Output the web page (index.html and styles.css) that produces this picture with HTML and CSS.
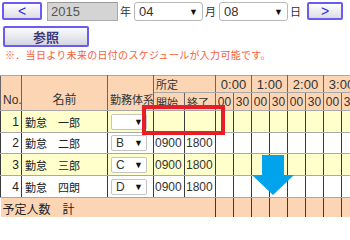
FILE: index.html
```html
<!DOCTYPE html>
<html lang="ja">
<head>
<meta charset="utf-8">
<title>スケジュール</title>
<link rel="stylesheet" href="styles.css">
</head>
<body>
<div class="page">
  <div class="nav">
    <button class="btn btn-nav">&lt;</button>
    <div class="year">2015</div>
    <span class="unit">年</span>
    <div class="sel sel-top"><span>04</span><span class="arr">▼</span></div>
    <span class="unit">月</span>
    <div class="sel sel-top"><span>08</span><span class="arr">▼</span></div>
    <span class="unit">日</span>
    <button class="btn btn-nav btn-next">&gt;</button>
  </div>
  <div class="actions"><button class="btn btn-ref">参照</button></div>
  <p class="note">※．当日より未来の日付のスケジュールが入力可能です。</p>
  <div class="grid-wrap">
    <table class="grid">
      <colgroup>
        <col class="c-no"><col class="c-name"><col class="c-type"><col class="c-time"><col class="c-time">
        <col class="c-half"><col class="c-half"><col class="c-half"><col class="c-half"><col class="c-half"><col class="c-half"><col class="c-half"><col class="c-half">
      </colgroup>
      <thead>
        <tr class="h1">
          <th rowspan="2" class="bottom">No.</th>
          <th rowspan="2" class="bottom">名前</th>
          <th rowspan="2" class="bottom left">勤務体系</th>
          <th colspan="2" class="left">所定</th>
          <th colspan="2" class="hour">0:00</th>
          <th colspan="2" class="hour">1:00</th>
          <th colspan="2" class="hour">2:00</th>
          <th colspan="2" class="hour">3:00</th>
        </tr>
        <tr class="h2">
          <th class="left">開始</th><th class="left">終了</th>
          <th class="sub">00</th><th class="sub">30</th>
          <th class="sub">00</th><th class="sub">30</th>
          <th class="sub">00</th><th class="sub">30</th>
          <th class="sub">00</th><th class="sub">30</th>
        </tr>
      </thead>
      <tbody>
        <tr class="odd">
          <td class="num">1</td><td class="name">勤怠　一郎</td>
          <td class="type"><div class="sel sel-cell"><span></span><span class="arr">▼</span></div></td>
          <td></td><td></td>
          <td></td><td></td><td></td><td></td><td></td><td></td><td></td><td></td>
        </tr>
        <tr class="even">
          <td class="num">2</td><td class="name">勤怠　二郎</td>
          <td class="type"><div class="sel sel-cell"><span>B</span><span class="arr">▼</span></div></td>
          <td class="t">0900</td><td class="t">1800</td>
          <td></td><td></td><td></td><td></td><td></td><td></td><td></td><td></td>
        </tr>
        <tr class="odd">
          <td class="num">3</td><td class="name">勤怠　三郎</td>
          <td class="type"><div class="sel sel-cell"><span>C</span><span class="arr">▼</span></div></td>
          <td class="t">0900</td><td class="t">1800</td>
          <td></td><td></td><td></td><td></td><td></td><td></td><td></td><td></td>
        </tr>
        <tr class="even">
          <td class="num">4</td><td class="name">勤怠　四朗</td>
          <td class="type"><div class="sel sel-cell"><span>D</span><span class="arr">▼</span></div></td>
          <td class="t">0900</td><td class="t">1800</td>
          <td></td><td></td><td></td><td></td><td></td><td></td><td></td><td></td>
        </tr>
      </tbody>
      <tfoot>
        <tr class="foot">
          <td colspan="5" class="total">予定人数　計</td>
          <td></td><td></td><td></td><td></td><td></td><td></td><td></td><td></td>
        </tr>
      </tfoot>
    </table>
    <div class="highlight"></div>
    <svg class="arrow" width="42" height="40" viewBox="0 0 42 40"><polygon points="10,0 32,0 32,20 42,20 21,40 0,20 10,20" fill="#00a3ec"/></svg>
  </div>
</div>
</body>
</html>
```
FILE: styles.css
```css
html, body {
  margin: 0;
  padding: 0;
  background: #ffffff;
}
body {
  font-family: "Liberation Sans", "Noto Sans CJK JP", sans-serif;
  color: #222;
  width: 350px;
  height: 217px;
  overflow: hidden;
}
.page {
  width: 350px;
}
.nav {
  display: flex;
  align-items: flex-start;
  padding: 2px 0 0 2px;
  height: 19px;
}
.btn {
  box-sizing: border-box;
  border: 2px solid #6a5cf0;
  border-radius: 2px;
  background: linear-gradient(#ffffff, #dcdce4);
  padding: 0;
  margin: 0;
  font-family: "Liberation Sans", "Noto Sans CJK JP", sans-serif;
  cursor: pointer;
}
.btn-nav {
  width: 40px;
  height: 18px;
  color: #2b2be0;
  font-size: 14px;
  line-height: 12px;
}
.btn-next {
  width: 36px;
  margin-left: 4px;
}
.year {
  box-sizing: border-box;
  width: 71px;
  height: 19px;
  margin-left: 5px;
  background: #d4d4d4;
  border: 1px solid #aaaaaa;
  border-top-color: #999;
  color: #555;
  font-size: 13px;
  line-height: 17px;
  padding-left: 3px;
}
.unit {
  font-family: "Noto Sans CJK JP", sans-serif;
  font-size: 11px;
  line-height: 19px;
  color: #333;
  margin: 0 4px 0 2px;
  width: 9px;
}
.sel {
  box-sizing: border-box;
  display: flex;
  justify-content: space-between;
  align-items: center;
  background: #fff;
  border: 1px solid #b8b8b8;
  border-radius: 3px;
}
.sel-top {
  width: 69px;
  height: 19px;
  font-size: 13px;
  color: #333;
  padding: 0 4px 0 4px;
  margin-left: 1px;
}
.arr {
  font-size: 9px;
  color: #111;
}
.actions {
  padding: 5px 0 0 3px;
}
.btn-ref {
  width: 86px;
  height: 21px;
  border-color: #6a5cf0;
  background: linear-gradient(#fbfbfd, #d6d6e2);
  font-family: "Noto Sans CJK JP", sans-serif;
  font-weight: bold;
  font-size: 13px;
  line-height: 15px;
  color: #3a3a78;
}
.note {
  margin: 1px 0 0 5px;
  font-family: "Noto Sans CJK JP", sans-serif;
  font-size: 10px;
  line-height: 14px;
  letter-spacing: 0.3px;
  color: #f5603c;
  white-space: nowrap;
}
.grid-wrap {
  position: relative;
  margin-top: 13px;
  width: 350px;
  overflow: hidden;
  height: 150px;
}
.grid {
  table-layout: fixed;
  border-collapse: collapse;
  width: 359px;
  font-size: 12px;
}
.c-no { width: 21px; }
.c-name { width: 86px; }
.c-type { width: 46px; }
.c-time { width: 31px; }
.c-half { width: 18px; }
.grid th, .grid td {
  padding: 0 2px;
  white-space: nowrap;
  overflow: hidden;
  border-left: 1px solid #3a3a3a;
  border-right: 1px solid #3a3a3a;
  border-top: 1px solid #a8a8a8;
  border-bottom: 1px solid #a8a8a8;
}
.grid thead th {
  background: #fcd5b5;
  font-weight: normal;
  color: #333;
  border-left-color: #666;
  border-right-color: #666;
  font-family: "Liberation Sans", "Noto Sans CJK JP", sans-serif;
}
.grid thead th.bottom {
  vertical-align: bottom;
  padding-bottom: 3px;
  font-size: 12px;
}
.grid thead th.left {
  text-align: left;
  font-size: 11px;
}
.h1 { height: 17px; }
.h2 { height: 18px; }
.grid th.hour {
  font-size: 13px;
}
.grid th.sub {
  padding: 0;
  font-size: 12px;
  text-align: center;
}
.grid tbody tr { height: 22px; }
.grid tbody tr:nth-child(2) { height: 21px; }
.odd td { background: #ffffcc; }
.even td { background: #ffffff; }
.grid td.num {
  text-align: right;
  padding-right: 2px;
}
.grid td.name {
  font-family: "Noto Sans CJK JP", sans-serif;
  font-size: 11px;
  padding-left: 3px;
}
.grid td.type {
  padding: 0 3px;
}
.sel-cell {
  width: 36px;
  height: 16px;
  font-size: 12px;
  padding: 0 3px 0 4px;
  border-color: #c4c4c4;
  border-radius: 2px;
  color: #333;
}
.grid td.t {
  padding: 0 1px;
  font-size: 12px;
  color: #333;
}
.foot td {
  background: #fcd5b5;
  height: 20px;
}
.grid td.total {
  font-family: "Noto Sans CJK JP", sans-serif;
  font-size: 12px;
  border-left: none;
  padding-left: 2px;
}
.highlight {
  position: absolute;
  left: 142px;
  top: 30px;
  width: 83px;
  height: 30px;
  box-sizing: border-box;
  border: 4px solid #e61e28;
}
.arrow {
  position: absolute;
  left: 252px;
  top: 80px;
}
```
